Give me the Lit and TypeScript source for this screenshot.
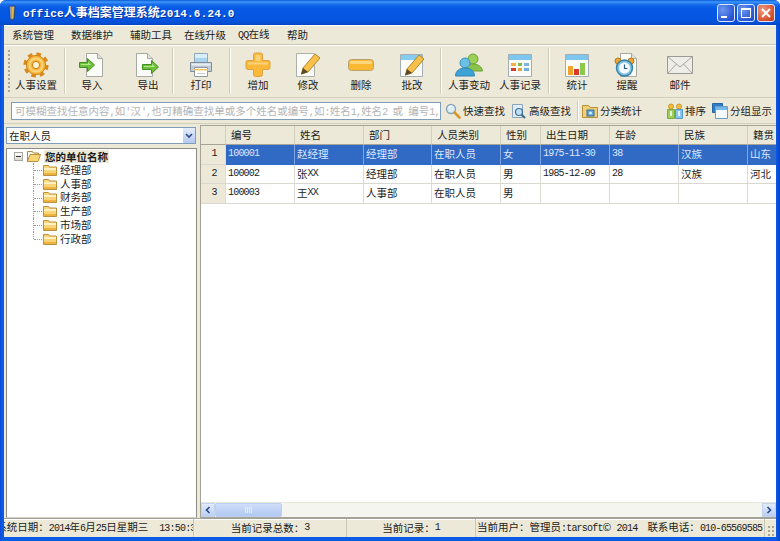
import { LitElement, html, svg, css, TemplateResult } from 'lit'
import { customElement } from 'lit/decorators.js'

// splits latin runs off, the original used a bitmap font with half width latin
const mix = (text: string) =>
  text.split(/([\x00-\x7f]+)/).map((part, i) => (i % 2 ? html`<span class="lat">${part}</span>` : part))

const doc = svg`<path d="M5.5 1.5h11l5 5v18h-16z" fill="#fbfbf8" stroke="#a9a9a4"/><path d="M16.5 1.5v5h5" fill="#e2e2dc" stroke="#a9a9a4"/>`

const icons: Record<string, () => TemplateResult> = {
  gear: () => html`<svg viewBox="0 0 26 26" width="26" height="26">
    <circle cx="13" cy="13" r="10.4" fill="none" stroke="#d98a1a" stroke-width="4.4" stroke-dasharray="4.4 3.77"/>
    <circle cx="13" cy="13" r="9.6" fill="#f6b63c" stroke="#cf8418"/>
    <circle cx="13" cy="13" r="6.6" fill="none" stroke="#fbd678" stroke-width="2"/>
    <circle cx="13" cy="13" r="3.6" fill="#fff3cf" stroke="#c97f18"/></svg>`,
  docIn: () => html`<svg viewBox="0 0 26 26" width="26" height="26"><g transform="translate(2 0)">${doc}</g>
    <path d="M0.500 10.500h8v-4l7 6.500-7 6.500v-4h-8z" fill="#6cc23c" stroke="#3f8f1f"/><path d="M2 12h7v-2l3 3H2z" fill="#b4e88a"/></svg>`,
  docOut: () => html`<svg viewBox="0 0 26 26" width="26" height="26"><g transform="translate(-4 0)">${doc}</g>
    <path d="M7.500 12.500h9v-4l7 6.500-7 6.500v-4h-9z" fill="#6cc23c" stroke="#3f8f1f"/><path d="M9 14h8v-2l3 3H9z" fill="#b4e88a"/></svg>`,
  print: () => html`<svg viewBox="0 0 26 26" width="26" height="26">
    <path d="M6.500 1.500h13v9h-13z" fill="#d9eefb" stroke="#8fa7bb"/><path d="M7 6h12v4H7z" fill="#a9d3ef"/>
    <path d="M2.500 10.500h21v9h-21z" fill="#c2ccd6" stroke="#7e8c9b"/><path d="M3.500 11.500h19v2h-19z" fill="#e9eef2"/>
    <path d="M6.500 15.500h13v9h-13z" fill="#fff" stroke="#8d97a1"/><path d="M6 17h14v1.400H6z" fill="#f3c650"/><path d="M9 21h8v1H9z" fill="#c8ced4"/></svg>`,
  plus: () => html`<svg viewBox="0 0 26 26" width="26" height="26">
    <path d="M8.500 3a2 2 0 0 1 2-2h5a2 2 0 0 1 2 2v5.500h5.500a2 2 0 0 1 2 2v5a2 2 0 0 1-2 2h-5.500v5a2 2 0 0 1-2 2h-5a2 2 0 0 1-2-2v-5h-5.500a2 2 0 0 1-2-2v-5a2 2 0 0 1 2-2h5.500z" fill="#fbb93a" stroke="#e0a040"/>
    <path d="M10.500 3h5v6h-5z" fill="#fdd27a"/><path d="M3 10.500h20v2H3z" fill="#fdd27a"/></svg>`,
  minus: () => html`<svg viewBox="0 0 26 26" width="26" height="26">
    <rect x="0.500" y="7.500" width="25" height="11" rx="3" fill="#fbb832" stroke="#b9a26a"/>
    <rect x="2" y="9" width="22" height="3" rx="1" fill="#fdd67e"/></svg>`,
  edit: () => html`<svg viewBox="0 0 26 26" width="26" height="26">
    <path d="M1.500 1.500h18v23h-18z" fill="#fbfbf8" stroke="#b0b0aa"/>
    <path d="M8 16l12-14 5 4-12 14-6.500 2z" fill="#f6c04a" stroke="#b5852a"/><path d="M6 22.500l2-6.500 5 4z" fill="#5a4a2a"/></svg>`,
  approve: () => html`<svg viewBox="0 0 26 26" width="26" height="26">
    <path d="M1.500 2.500h22v22h-22z" fill="#fbfbf8" stroke="#a3adb3"/><path d="M2 3h21v5H2z" fill="#86ccf2"/>
    <path d="M8 17l12-14 5 4-12 14-6.500 2z" fill="#f6c04a" stroke="#b5852a"/><path d="M6 23.500l2-6.500 5 4z" fill="#5a4a2a"/></svg>`,
  people: () => html`<svg viewBox="0 0 28 26" width="28" height="26">
    <circle cx="18" cy="7" r="5" fill="#9ccf58" stroke="#6ea236"/><path d="M11 19c0-5 3-7 7-7s9 2 9.500 7z" fill="#8ac24a" stroke="#6ea236"/>
    <circle cx="10" cy="11" r="5" fill="#6cc0e6" stroke="#3a90bc"/><path d="M0.500 24c0-5 4-8 9.500-8s9.500 3 9.500 8z" fill="#3ea4d6" stroke="#2f86b4"/></svg>`,
  record: () => html`<svg viewBox="0 0 26 26" width="26" height="26">
    <path d="M1.500 2.500h23v22h-23z" fill="#fbfbf8" stroke="#a3adb3"/><path d="M2 3h22v5H2z" fill="#7cc6f0"/>
    <path d="M4 11h5v3H4z" fill="#f0b040"/><path d="M11 11h4v3h-4z" fill="#7bbf4a"/><path d="M17 11h5v3h-5z" fill="#7fb6e0"/>
    <path d="M4 16h5v3H4z" fill="#d43c2c"/><path d="M11 16h4v3h-4z" fill="#e2a23a"/><path d="M17 16h5v3h-5z" fill="#6fb0dc"/></svg>`,
  chart: () => html`<svg viewBox="0 0 26 26" width="26" height="26">
    <path d="M1.500 2.500h23v22h-23z" fill="#fbfbf8" stroke="#a3adb3"/><path d="M2 3h22v5H2z" fill="#7cc6f0"/>
    <path d="M4 14h5v9H4z" fill="#f2a32c"/><path d="M10 17h5v6h-5z" fill="#d8392b"/><path d="M16 11h5v12h-5z" fill="#8ac94a"/></svg>`,
  alarm: () => html`<svg viewBox="0 0 26 26" width="26" height="26"><g transform="translate(1 0)">${doc}</g>
    <circle cx="4" cy="9" r="3" fill="#f2a32c" stroke="#b77a18"/><circle cx="17" cy="9" r="3" fill="#f2a32c" stroke="#b77a18"/>
    <circle cx="10.500" cy="16" r="8" fill="#7cc3e6" stroke="#3a7ea6" stroke-width="1.400"/><circle cx="10.500" cy="16" r="5.500" fill="#f4fafd"/>
    <path d="M10.500 12.500V16.500h3" fill="none" stroke="#2b5e86" stroke-width="1.200"/></svg>`,
  mail: () => html`<svg viewBox="0 0 26 26" width="26" height="26">
    <path d="M0.500 4.500h25v17h-25z" fill="#eeede8" stroke="#9a9a95"/><path d="M0.500 4.500L13 15 25.500 4.500M0.500 21.500l9-9.500M25.500 21.500l-9-9.500" fill="none" stroke="#a6a6a0"/></svg>`,
  search: () => html`<svg viewBox="0 0 16 16" width="16" height="16">
    <circle cx="6" cy="6" r="4.500" fill="#dcedf8" stroke="#88a4b8" stroke-width="1.400"/><path d="M4 5a2.500 2.500 0 0 1 3-2" stroke="#fff" fill="none"/>
    <path d="M9.500 9.500l5 5" stroke="#d9962a" stroke-width="2.600" stroke-linecap="round"/></svg>`,
  advanced: () => html`<svg viewBox="0 0 16 16" width="16" height="16">
    <path d="M1.500 1.500h10v13h-10z" fill="#dfeef9" stroke="#8ca4b8"/><circle cx="8" cy="9" r="3.500" fill="#bfe0f5" stroke="#3f6f94" stroke-width="1.200"/>
    <path d="M10.500 11.500l3.500 3.500" stroke="#3a6a90" stroke-width="2"/></svg>`,
  classify: () => html`<svg viewBox="0 0 16 16" width="16" height="16">
    <path d="M0.500 2.500h6l1.500 2h7.500v10H0.500z" fill="#f4cf76" stroke="#b78f35"/>
    <rect x="5" y="7" width="7" height="6" fill="#5fa8d8" stroke="#356f9c"/><circle cx="8.500" cy="10" r="1.500" fill="#d5ecfa"/></svg>`,
  sort: () => html`<svg viewBox="0 0 16 16" width="16" height="16">
    <circle cx="4" cy="3.500" r="2.500" fill="#f3bd3a" stroke="#c99a30"/><circle cx="12" cy="3.500" r="2.500" fill="#f3bd3a" stroke="#c99a30"/>
    <path d="M0.500 6.500h7v9h-7z" fill="#9ccf58" stroke="#7aaa40"/><path d="M8.500 6.500h7v9h-7z" fill="#84c4ee" stroke="#5a9ac8"/>
    <path d="M4 8v5M12 8v5" stroke="#fff" stroke-width="1.500"/></svg>`,
  group: () => html`<svg viewBox="0 0 16 16" width="16" height="16">
    <path d="M0.500 0.500h10v9h-10z" fill="#2e7fc8" stroke="#2466a6"/><path d="M3.500 3.500h12v12h-12z" fill="#f4f9fd" stroke="#6c9cc4"/><path d="M4 4h11v3H4z" fill="#74b8ea"/></svg>`,
  folder: () => html`<svg viewBox="0 0 14 12" width="14" height="12">
    <path d="M0.500 1.500h5l1 1.500h7v8.500H0.500z" fill="#f9d578" stroke="#b8923e"/><path d="M1 4h12v2H1z" fill="#fdf0c2"/><path d="M1 9h12v2H1z" fill="#eeb23e"/></svg>`,
  folderOpen: () => html`<svg viewBox="0 0 14 12" width="14" height="12">
    <path d="M0.500 1.500h5l1 1.500h5v2" fill="#f6e3ae" stroke="#a98c48"/><path d="M0.500 11.500V1.500" stroke="#a98c48"/>
    <path d="M0.500 11.500l2.500-7h10.500l-2.500 7z" fill="#f9d578" stroke="#b8923e"/></svg>`,
}

const tools = [
  { at: 36, icon: 'gear', label: '人事设置' },
  { at: 65 },
  { at: 92, icon: 'docIn', label: '导入' },
  { at: 148, icon: 'docOut', label: '导出' },
  { at: 173 },
  { at: 201, icon: 'print', label: '打印' },
  { at: 230 },
  { at: 258, icon: 'plus', label: '增加' },
  { at: 308, icon: 'edit', label: '修改' },
  { at: 361, icon: 'minus', label: '删除' },
  { at: 412, icon: 'approve', label: '批改' },
  { at: 441 },
  { at: 469, icon: 'people', label: '人事变动' },
  { at: 520, icon: 'record', label: '人事记录' },
  { at: 549 },
  { at: 577, icon: 'chart', label: '统计' },
  { at: 627, icon: 'alarm', label: '提醒' },
  { at: 680, icon: 'mail', label: '邮件' },
]

const menus = [
  { label: '系统管理', width: 59 },
  { label: '数据维护', width: 59 },
  { label: '辅助工具', width: 54 },
  { label: '在线升级', width: 54 },
  { label: 'QQ在线', width: 49 },
  { label: '帮助', width: 40 },
]

const columns = ['编号', '姓名', '部门', '人员类别', '性别', '出生日期', '年龄', '民族', '籍贯']

const rows = [
  ['100001', '赵经理', '经理部', '在职人员', '女', '1975-11-30', '38', '汉族', '山东'],
  ['100002', '张XX', '经理部', '在职人员', '男', '1985-12-09', '28', '汉族', '河北'],
  ['100003', '王XX', '人事部', '在职人员', '男', '', '', '', ''],
]

const depts = ['经理部', '人事部', '财务部', '生产部', '市场部', '行政部']

@customElement('app-root')
export class AppRoot extends LitElement {
  static styles = css`
    :host {
      display: block;
      width: 780px;
      height: 541px;
      overflow: hidden;
      font: 10.5px/14px "Noto Sans CJK SC", sans-serif;
      color: #1c1c1c;
    }
    .lat {
      font-family: "Liberation Mono", monospace;
      font-size: 10px;
      letter-spacing: -0.8px;
    }
    .win {
      height: 100%;
      display: flex;
      flex-direction: column;
      background: linear-gradient(90deg, #0a49d6, #0a5be6 2px, #0a5be6 776px, #0a3fc8);
      border-radius: 6px 6px 0 0;
    }
    .title {
      height: 25px;
      flex: none;
      display: flex;
      align-items: center;
      padding: 0 5px 0 8px;
      color: #fff;
      font-weight: 700;
      font-size: 12px;
      text-shadow: 1px 1px 0 #0a2f9c;
      border-radius: 6px 6px 0 0;
      background: linear-gradient(#0a5ad8 0, #3f98fb 2px, #1a70ee 4px, #0659e4 8px, #0557e2 18px, #0650d6 23px, #0442bd 25px);
    }
    .title .lat {
      font-size: 11px;
      font-weight: 700;
      letter-spacing: 0.2px;
    }
    .app-icon {
      margin-right: 7px;
    }
    .caps {
      margin-left: auto;
      display: flex;
      gap: 2px;
    }
    .cap {
      width: 18px;
      height: 18px;
      box-sizing: border-box;
      border: 1px solid #dfe8fb;
      border-radius: 3px;
      background: radial-gradient(circle at 30% 30%, #6d97ee, #2a58d8 70%, #2048c0);
    }
    .cap.close {
      background: radial-gradient(circle at 30% 30%, #ec9a80, #d8502c 70%, #b83a1c);
    }
    .cap svg {
      display: block;
    }
    .body {
      flex: 1;
      min-height: 0;
      margin: 0 4px 4px;
      display: flex;
      flex-direction: column;
      background: #ece9d8;
    }
    .menu {
      height: 20px;
      flex: none;
      box-sizing: border-box;
      display: flex;
      align-items: center;
      padding-left: 8px;
      border-bottom: 1px solid #c9c6b4;
      box-shadow: 0 1px 0 #fff inset;
    }
    .menu div {
      flex: none;
    }
    .toolbar {
      height: 53px;
      flex: none;
      display: flex;
      border-bottom: 1px solid #d2cfbd;
      border-top: 1px solid #fff;
      box-sizing: border-box;
    }
    .tool {
      width: 48px;
      flex: none;
      display: flex;
      flex-direction: column;
      align-items: center;
      padding-top: 6px;
    }
    .tool .pic {
      height: 26px;
      line-height: 0;
    }
    .tool .label {
      line-height: 13px;
      white-space: nowrap;
    }
    .sep {
      width: 2px;
      flex: none;
      margin: 2px 0 3px;
      border-left: 1px solid #cfccb9;
      border-right: 1px solid #fff;
      box-sizing: border-box;
    }
    .grip {
      width: 2px;
      flex: none;
      margin: 4px 0 4px 4px;
      background: repeating-linear-gradient(#a8a595 0 2px, transparent 2px 4px);
    }
    .searchbar {
      height: 26px;
      flex: none;
      display: flex;
      align-items: center;
      padding-left: 7px;
      border-bottom: 1px solid #d2cfbd;
      box-sizing: border-box;
    }
    .search-text {
      width: 430px;
      height: 18px;
      box-sizing: border-box;
      flex: none;
      border: 1px solid #7f9db9;
      background: #fff;
      color: #b4b4b4;
      padding-left: 3px;
      line-height: 16px;
      white-space: nowrap;
      overflow: hidden;
    }
    .sbtn {
      display: flex;
      align-items: center;
      gap: 2px;
      flex: none;
    }
    .sbtn svg {
      flex: none;
    }
    .quick { margin-left: 4px; }
    .adv { margin-left: 6px; }
    .srt { margin-left: 25px; }
    .grp { margin-left: 6px; }
    .sep.small {
      height: 20px;
      margin: 0 3px 0 6px;
    }
    .main {
      flex: 1;
      min-height: 0;
      display: flex;
    }
    .left {
      width: 193px;
      flex: none;
      box-sizing: border-box;
      padding: 3px 0 0 2px;
      display: flex;
      flex-direction: column;
      gap: 4px;
    }
    .combo {
      height: 17px;
      flex: none;
      margin-right: 1px;
      box-sizing: border-box;
      border: 1px solid #7f9db9;
      background: #fff;
      display: flex;
      align-items: center;
      padding-left: 2px;
      justify-content: space-between;
    }
    .combo .arrow {
      width: 12px;
      height: 15px;
      border-radius: 1px;
      background: linear-gradient(#e4edfc, #b4c9ef);
      display: flex;
      align-items: center;
      justify-content: center;
    }
    .tree {
      flex: 1;
      min-height: 0;
      border: 1px solid #8c8c84;
      border-bottom-color: #d4d0c8;
      background: #fff;
      padding: 0 0 0 7px;
    }
    .root {
      height: 14px;
      display: flex;
      align-items: center;
    }
    .plus {
      width: 9px;
      height: 9px;
      box-sizing: border-box;
      border: 1px solid #a6a6a0;
      background: linear-gradient(#fff, #dcd9cc);
      display: flex;
      align-items: center;
      justify-content: center;
      margin-right: 4px;
    }
    .plus i {
      width: 5px;
      height: 1px;
      background: #333;
    }
    .root b {
      margin-left: 3px;
      background: #ece9d8;
      padding: 0 1px;
      line-height: 13px;
    }
    .child {
      height: 13.75px;
      display: flex;
      align-items: center;
      margin-left: 19px;
    }
    .conn {
      width: 9px;
      height: 100%;
      flex: none;
      position: relative;
      border-left: 1px dotted #9a9a94;
      box-sizing: border-box;
      margin-right: 1px;
    }
    .child:last-child .conn {
      height: 50%;
      align-self: flex-start;
    }
    .conn::after {
      content: "";
      position: absolute;
      left: 0;
      right: 0;
      top: 7px;
      border-top: 1px dotted #9a9a94;
    }
    .child svg {
      margin-right: 3px;
      flex: none;
    }
    .splitter {
      width: 3px;
      flex: none;
    }
    .grid-wrap {
      flex: 1;
      min-width: 0;
      margin-top: 1px;
      border: 1px solid #a5a297;
      border-right: 0;
      background: #fff;
      display: flex;
      flex-direction: column;
    }
    .grid {
      flex: 1;
      min-height: 0;
      overflow: hidden;
      display: grid;
      grid-template-columns: 25px 69px 69px 68px 69px 40px 69px 69px 69px 69px;
      grid-template-rows: 19px;
      grid-auto-rows: 19.5px;
      align-content: start;
    }
    .cell, .head {
      box-sizing: border-box;
      display: flex;
      align-items: center;
      white-space: nowrap;
      overflow: hidden;
    }
    .head {
      background: #ece9d8;
      border-right: 1px solid #d2cfbd;
      border-bottom: 1px solid #a5a297;
      padding-left: 5px;
    }
    .head.no {
      padding: 0;
    }
    .num {
      background: #ece9d8;
      border-right: 1px solid #a5a297;
      border-bottom: 1px solid #c8c5b4;
      justify-content: center;
      padding: 0;
    }
    .cell {
      border-right: 1px solid #dcdcd4;
      border-bottom: 1px solid #d8d8d0;
      padding-left: 2px;
    }
    .cell.sel {
      background: #316ac5;
      color: #dbe8ff;
      border-right-color: #7fa6e0;
      border-bottom-color: #316ac5;
    }
    .hbar {
      height: 14px;
      flex: none;
      display: flex;
      background: #f5f5ef;
      border-top: 1px solid #e8e6da;
    }
    .hbar .btn {
      width: 14px;
      flex: none;
      background: linear-gradient(#e2ebfb, #bccff2);
      border: 1px solid #c2d3f2;
      box-sizing: border-box;
      display: flex;
      align-items: center;
      justify-content: center;
    }
    .hbar .thumb {
      width: 67px;
      flex: none;
      background: linear-gradient(#cfdefa, #b2c8f0);
      border: 1px solid #bcd0f2;
      border-radius: 2px;
      box-sizing: border-box;
      display: flex;
      align-items: center;
      justify-content: center;
      gap: 1px;
    }
    .hbar .thumb i {
      width: 1px;
      height: 6px;
      background: #e6eefc;
    }
    .hbar .track {
      flex: 1;
    }
    .status {
      height: 19px;
      flex: none;
      display: flex;
      border-top: 1px solid #a5a297;
      box-sizing: border-box;
      box-shadow: 0 1px 0 #fff inset;
    }
    .stat {
      flex: none;
      box-sizing: border-box;
      display: flex;
      align-items: center;
      justify-content: center;
      white-space: nowrap;
      overflow: hidden;
      border-right: 1px solid #c9c6b4;
    }
    .stat.user {
      justify-content: flex-start;
      padding-left: 1px;
    }
    .clock {
      margin-left: 11px;
    }
    .phone {
      margin-left: 10px;
    }
    .resize {
      flex: 1;
      background:
        radial-gradient(circle at 1px 1px, #a8a595 1px, transparent 1.200px) 0 0 / 4px 4px;
      margin: 7px 0 0 3px;
    }
  `

  private toolbar() {
    // the buttons sit by their centre, the gaps between them are uneven
    let cursor = 10
    return tools.map(t => {
      const width = t.icon ? 48 : 2
      const gap = t.at - width / 2 - cursor
      cursor += gap + width
      return t.icon
        ? html`<div class="tool" style="margin-left:${gap}px">
            <div class="pic">${icons[t.icon]()}</div>
            <div class="label">${t.label}</div>
          </div>`
        : html`<div class="sep" style="margin-left:${gap}px"></div>`
    })
  }

  private searchButton(cls: string, icon: string, label: string) {
    return html`<div class="sbtn ${cls}">${icons[icon]()}<span>${label}</span></div>`
  }

  render() {
    return html`
      <div class="win">
        <div class="title">
          <svg class="app-icon" viewBox="0 0 8 16" width="8" height="16">
            <path d="M1 1h6l-1 13-2 1-2-1z" fill="#8f9db0" stroke="#2c3a58" stroke-width="0.800"/>
            <path d="M4 2h2l-1 11H4z" fill="#e0b84a"/>
          </svg>
          <span>${mix('office人事档案管理系统2014.6.24.0')}</span>
          <div class="caps">
            <div class="cap">
              <svg viewBox="0 0 16 16" width="16" height="16"><path d="M3 11h6v2H3z" fill="#fff"/></svg>
            </div>
            <div class="cap">
              <svg viewBox="0 0 16 16" width="16" height="16"><path d="M3.500 4.500h9v8h-9z" fill="none" stroke="#fff"/><path d="M3 3h10v2H3z" fill="#fff"/></svg>
            </div>
            <div class="cap close">
              <svg viewBox="0 0 16 16" width="16" height="16"><path d="M4 4l8 8M12 4l-8 8" stroke="#fff" stroke-width="2"/></svg>
            </div>
          </div>
        </div>
        <div class="body">
          <div class="menu">
            ${menus.map(m => html`<div style="width:${m.width}px">${mix(m.label)}</div>`)}
          </div>
          <div class="toolbar">
            <div class="grip"></div>
            ${this.toolbar()}
          </div>
          <div class="searchbar">
            <div class="search-text">${mix("可模糊查找任意内容,如'汉',也可精确查找单或多个姓名或编号,如:姓名1,姓名2 或 编号1,编号1")}</div>
            ${this.searchButton('quick', 'search', '快速查找')}
            ${this.searchButton('adv', 'advanced', '高级查找')}
            <div class="sep small"></div>
            ${this.searchButton('', 'classify', '分类统计')}
            ${this.searchButton('srt', 'sort', '排序')}
            ${this.searchButton('grp', 'group', '分组显示')}
          </div>
          <div class="main">
            <div class="left">
              <div class="combo">
                <span>在职人员</span>
                <div class="arrow">
                  <svg viewBox="0 0 8 6" width="8" height="6"><path d="M1 1l3 3 3-3" fill="none" stroke="#2a4a8c" stroke-width="1.600"/></svg>
                </div>
              </div>
              <div class="tree">
                <div class="root">
                  <div class="plus"><i></i></div>
                  ${icons.folderOpen()}
                  <b>您的单位名称</b>
                </div>
                ${depts.map(d => html`<div class="child"><span class="conn"></span>${icons.folder()}<span>${d}</span></div>`)}
              </div>
            </div>
            <div class="splitter"></div>
            <div class="grid-wrap">
              <div class="grid">
                <div class="head no"></div>
                ${columns.map(c => html`<div class="head">${c}</div>`)}
                ${rows.map((row, i) => html`
                  <div class="cell num">${mix(String(i + 1))}</div>
                  ${row.map(v => html`<div class="cell ${i === 0 ? 'sel' : ''}">${mix(v)}</div>`)}
                `)}
              </div>
              <div class="hbar">
                <div class="btn"><svg viewBox="0 0 8 8" width="8" height="8"><path d="M5.500 1l-3 3 3 3" fill="none" stroke="#2a4a8c" stroke-width="1.600"/></svg></div>
                <div class="thumb"><i></i><i></i><i></i><i></i></div>
                <div class="track"></div>
                <div class="btn"><svg viewBox="0 0 8 8" width="8" height="8"><path d="M2.500 1l3 3-3 3" fill="none" stroke="#2a4a8c" stroke-width="1.600"/></svg></div>
              </div>
            </div>
          </div>
          <div class="status">
            <div class="stat" style="width:190px">
              <span>${mix('系统日期：2014年6月25日星期三')}</span><span class="clock">${mix('13:50:34')}</span>
            </div>
            <div class="stat" style="width:153px">${mix('当前记录总数：3')}</div>
            <div class="stat" style="width:129px">${mix('当前记录：1')}</div>
            <div class="stat user" style="width:289px">
              <span>${mix('当前用户：管理员:tarsoft© 2014')}</span><span class="phone">${mix('联系电话：010-65569585')}</span>
            </div>
            <div class="resize"></div>
          </div>
        </div>
      </div>
    `
  }
}
